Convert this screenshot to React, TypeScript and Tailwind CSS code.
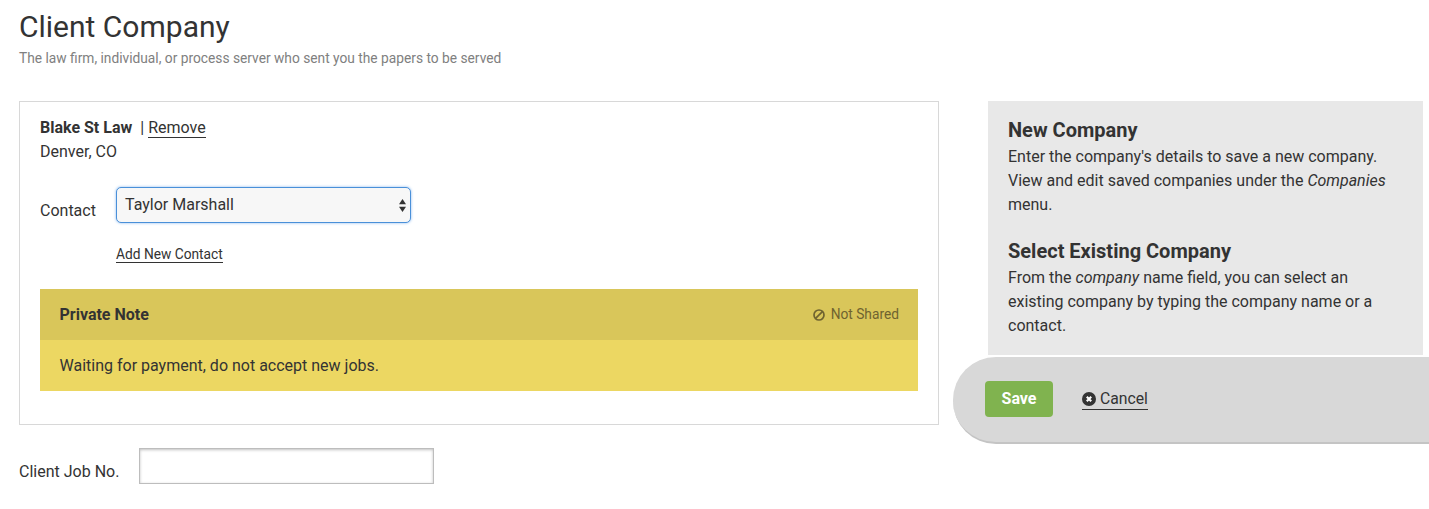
export default function App() {
  return (
    <div className="h-[509px] w-[1429px] overflow-hidden bg-white font-['Roboto',sans-serif] text-[#333] flex">
      <div className="w-[953px] shrink-0 pl-[19px] pr-[14px]">
        <h1 className="mt-[9px] text-[30px] leading-[36px] font-normal text-[#333]">Client Company</h1>
        <p className="mt-[5px] text-[13.75px] leading-[16px] text-[#808080]">The law firm, individual, or process server who sent you the papers to be served</p>
        <div className="mt-[35px] h-[324px] border border-[#d8d8d8] px-[20px] pt-[16px]">
          <div className="text-[16px] leading-[20px]">
            <span className="font-bold">Blake St Law</span>
            <span className="ml-[8px]">|</span>
            <a className="ml-[4px] border-b border-[#333]">Remove</a>
          </div>
          <div className="mt-[4px] text-[16px] leading-[20px]">Denver, CO</div>
          <div className="mt-[25px] flex">
            <label className="mt-[14px] w-[76px] text-[16px] leading-[20px]">Contact</label>
            <div className="flex h-[36px] w-[295px] items-center justify-between rounded-[5px] border border-[#4a90d9] bg-[#f7f7f7] pl-[8px] pr-[3px] text-[16px] shadow-[0_0_3px_#8ab8ee]">
              <span>Taylor Marshall</span>
              <svg width="9" height="15" viewBox="0 0 9 15" className="fill-[#333]"><path d="M4.5 1 8 6.2H1z" /><path d="M4.5 14 8 8.8H1z" /></svg>
            </div>
          </div>
          <div className="mt-[23px] pl-[76px] text-[13.75px] leading-[17px]">
            <a className="border-b border-[#333]">Add New Contact</a>
          </div>
          <div className="mt-[26px]">
            <div className="flex h-[51px] items-center justify-between bg-[#d9c65a] pl-[19.5px] pr-[19px]">
              <span className="text-[16px] font-bold">Private Note</span>
              <span className="flex items-center gap-[6px] text-[13.75px] text-[#6f6330]">
                <svg width="12" height="12" viewBox="0 0 12 12" fill="none" stroke="#6f6330" strokeWidth="1.7"><circle cx="6" cy="6" r="5" /><path d="M2.6 9.4 9.4 2.6" /></svg>
                Not Shared
              </span>
            </div>
            <div className="flex h-[51px] items-center bg-[#ecd762] pl-[19.5px] text-[16px]">Waiting for payment, do not accept new jobs.</div>
          </div>
        </div>
        <div className="mt-[23px] flex">
          <label className="mt-[14px] w-[120px] text-[16px] leading-[20px]">Client Job No.</label>
          <input className="h-[36px] w-[295px] border border-[#bdbdbd] bg-white shadow-[inset_0_1px_3px_rgba(0,0,0,0.25)]" />
        </div>
      </div>
      <div className="flex-1 pt-[101px]">
        <div className="ml-[35px] mr-[6px] h-[254px] bg-[#e8e8e8] pl-[20px] pr-[20px] pt-[17px]">
          <h2 className="text-[20px] leading-[24px] font-bold">New Company</h2>
          <p className="mt-[3px] text-[16px] leading-[24px]">Enter the company's details to save a new company. View and edit saved companies under the <em>Companies</em> menu.</p>
          <h2 className="mt-[22px] text-[20px] leading-[24px] font-bold">Select Existing Company</h2>
          <p className="mt-[3px] text-[16px] leading-[24px]">From the <em>company</em> name field, you can select an existing company by typing the company name or a contact.</p>
        </div>
        <div className="mt-[2px] flex h-[87px] items-center rounded-l-[43px] border-b-2 border-[#c4c4c4] bg-[#d8d8d8] pb-[1px] pl-[32px]">
          <button className="h-[36px] w-[68px] rounded-[4px] bg-[#80b34f] text-[16px] font-bold text-white">Save</button>
          <a className="ml-[29px] flex items-center gap-[4px] border-b border-[#333] text-[15.75px] leading-[20px]">
            <svg width="14" height="14" viewBox="0 0 14 14"><circle cx="7" cy="7" r="7" fill="#333" /><path d="M4.8 4.8 9.2 9.2M9.2 4.8 4.8 9.2" stroke="#fff" strokeWidth="2.2" /></svg>
            Cancel
          </a>
        </div>
      </div>
    </div>
  );
}
